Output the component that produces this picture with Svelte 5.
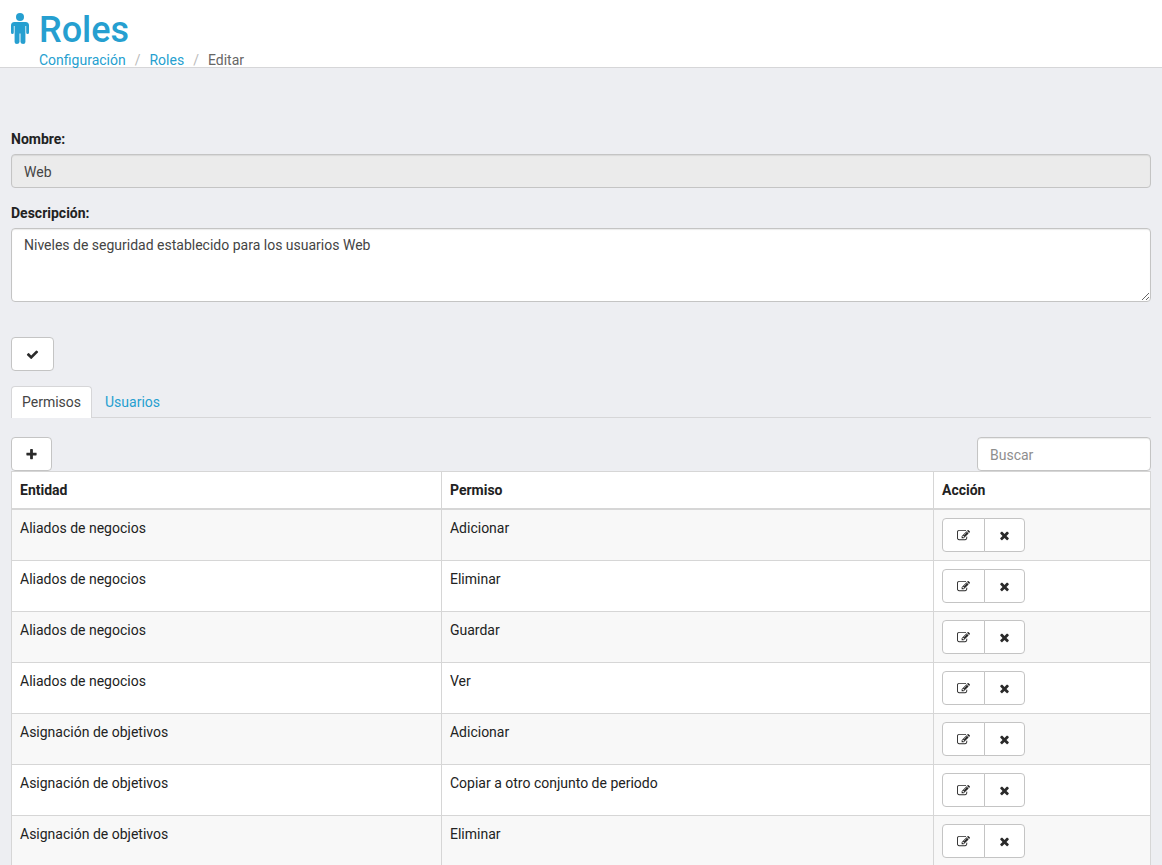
<script>
  let nombre = 'Web';
  let descripcion = 'Niveles de seguridad establecido para los usuarios Web';
  let buscar = '';
  let tab = 'permisos';

  const permisos = [
    { entidad: 'Aliados de negocios', permiso: 'Adicionar' },
    { entidad: 'Aliados de negocios', permiso: 'Eliminar' },
    { entidad: 'Aliados de negocios', permiso: 'Guardar' },
    { entidad: 'Aliados de negocios', permiso: 'Ver' },
    { entidad: 'Asignación de objetivos', permiso: 'Adicionar' },
    { entidad: 'Asignación de objetivos', permiso: 'Copiar a otro conjunto de periodo' },
    { entidad: 'Asignación de objetivos', permiso: 'Eliminar' }
  ];

  $: filas = permisos.filter((p) =>
    (p.entidad + ' ' + p.permiso).toLowerCase().includes(buscar.toLowerCase())
  );
</script>

<header>
  <svg class="male" viewBox="0 0 18 31" aria-hidden="true">
    <circle cx="9" cy="4" r="4" />
    <path d="M3.500 9H14.500Q18 9 18 12.500V19.500Q18 21 16.600 21T15.200 19.500V13H14.400V29Q14.400 31 12.100 31T9.500 29V20.500H8.500V29Q8.200 31 5.900 31T3.600 29V13H2.800V19.500Q2.800 21 1.400 21T0 19.500V12.500Q0 9 3.500 9Z" />
  </svg>
  <div>
    <h1>Roles</h1>
    <nav aria-label="Ruta">
      <ol class="breadcrumb">
        <li><a href="#configuracion">Configuración</a></li>
        <li><a href="#roles">Roles</a></li>
        <li class="active">Editar</li>
      </ol>
    </nav>
  </div>
</header>

<main>
  <form on:submit|preventDefault>
    <div class="form-group">
      <label for="nombre">Nombre:</label>
      <input id="nombre" class="form-control" type="text" bind:value={nombre} disabled />
    </div>
    <div class="form-group">
      <label for="descripcion">Descripción:</label>
      <textarea id="descripcion" class="form-control" rows="3" spellcheck="false" bind:value={descripcion}></textarea>
    </div>
    <button class="btn save" type="submit" aria-label="Guardar">
      <svg class="icon" viewBox="0 0 1792 1792"><path d="M1671 566q0 40-28 68l-724 724-136 136q-28 28-68 28t-68-28l-136-136-362-362q-28-28-28-68t28-68l136-136q28-28 68-28t68 28l294 295 656-657q28-28 68-28t68 28l136 136q28 28 28 68z" /></svg>
    </button>
  </form>

  <ul class="tabs">
    <li><a href="#permisos" class:active={tab === 'permisos'} on:click={() => (tab = 'permisos')}>Permisos</a></li>
    <li><a href="#usuarios" class:active={tab === 'usuarios'} on:click={() => (tab = 'usuarios')}>Usuarios</a></li>
  </ul>

  <div class="toolbar">
    <button class="btn" type="button" aria-label="Agregar">
      <svg class="icon" viewBox="0 0 1792 1792"><path d="M1600 736v192q0 40-28 68t-68 28h-416v416q0 40-28 68t-68 28h-192q-40 0-68-28t-28-68v-416h-416q-40 0-68-28t-28-68v-192q0-40 28-68t68-28h416v-416q0-40 28-68t68-28h192q40 0 68 28t28 68v416h416q40 0 68 28t28 68z" /></svg>
    </button>
    <input class="form-control search" type="text" placeholder="Buscar" aria-label="Buscar" bind:value={buscar} />
  </div>

  <table>
    <thead>
      <tr>
        <th class="entidad">Entidad</th>
        <th class="permiso">Permiso</th>
        <th>Acción</th>
      </tr>
    </thead>
    <tbody>
      {#each filas as fila}
        <tr>
          <td>{fila.entidad}</td>
          <td>{fila.permiso}</td>
          <td>
            <div class="btn-group">
              <button class="btn" type="button" aria-label="Editar">
                <svg class="icon" viewBox="0 0 1792 1792"><path d="M888 1184l116-116-152-152-116 116v56h96v96h56zm440-720q-16-16-33 1l-350 350q-17 17-1 33t33-1l350-350q17-17 1-33zm80 594v190q0 119-84.500 203.500t-203.500 84.500h-832q-119 0-203.500-84.500t-84.500-203.500v-832q0-119 84.500-203.500t203.500-84.500h832q63 0 117 25 15 7 18 23 3 17-9 29l-49 49q-14 14-32 8-23-6-45-6h-832q-66 0-113 47t-47 113v832q0 66 47 113t113 47h832q66 0 113-47t47-113v-126q0-13 9-22l64-64q15-15 35-7t20 29zm-96-738l288 288-672 672h-288v-288zm444 132l-92 92-288-288 92-92q28-28 68-28t68 28l152 152q28 28 28 68t-28 68z" /></svg>
              </button>
              <button class="btn" type="button" aria-label="Eliminar">
                <svg class="icon" viewBox="0 0 1792 1792"><path d="M1490 1322q0 40-28 68l-136 136q-28 28-68 28t-68-28l-294-294-294 294q-28 28-68 28t-68-28l-136-136q-28-28-28-68t28-68l294-294-294-294q-28-28-28-68t28-68l136-136q28-28 68-28t68 28l294 294 294-294q28-28 68-28t68 28l136 136q28 28 28 68t-28 68l-294 294 294 294q28 28 28 68z" /></svg>
              </button>
            </div>
          </td>
        </tr>
      {/each}
    </tbody>
  </table>
</main>

<style>
  :global(body) {
    background: #edeef2;
    color: #222;
    font-family: Roboto, 'Liberation Sans', sans-serif;
    font-size: 14px;
    line-height: 20px;
  }

  :global(*) {
    box-sizing: border-box;
  }

  a {
    color: #269fd0;
    text-decoration: none;
  }

  header {
    display: flex;
    gap: 10px;
    padding: 10px 11px 0;
    background: #fff;
    border-bottom: 1px solid #d6d6d8;
  }

  .male {
    width: 18px;
    height: 31px;
    margin-top: 3px;
    fill: #269fd0;
  }

  h1 {
    margin: 0;
    color: #269fd0;
    font-size: 36px;
    font-weight: 500;
    line-height: 40px;
  }

  .breadcrumb {
    display: flex;
    margin: 0;
    padding: 0;
    height: 17px;
    list-style: none;
  }

  .breadcrumb li + li::before {
    content: '/';
    padding: 0 9px;
    color: #bbb;
  }

  .breadcrumb .active {
    color: #666;
  }

  main {
    padding: 61px 11px 0;
  }

  .form-group {
    margin-bottom: 15px;
  }

  label {
    display: block;
    margin-bottom: 5px;
    font-weight: 700;
  }

  .form-control {
    display: block;
    width: 100%;
    height: 34px;
    padding: 7px 12px 5px;
    background: #fff;
    border: 1px solid #c4c4c4;
    border-radius: 4px;
    box-shadow: inset 0 1px 1px rgba(0, 0, 0, 0.08);
    color: #444;
    font: inherit;
  }

  .form-control::placeholder {
    color: #8e8e8e;
  }

  .form-control:disabled {
    background: #ebebeb;
  }

  textarea.form-control {
    height: 74px;
    padding: 6px 12px;
    resize: vertical;
  }

  .btn {
    display: inline-flex;
    align-items: center;
    justify-content: center;
    width: 41px;
    height: 34px;
    padding: 0;
    background: #fff;
    border: 1px solid #c4c4c4;
    border-radius: 4px;
    cursor: pointer;
  }

  .icon {
    width: 13px;
    height: 13px;
    fill: #2a2a2a;
  }

  .save {
    width: 43px;
    margin-top: 20px;
  }

  .tabs {
    display: flex;
    gap: 2px;
    margin: 15px 0 19px;
    padding: 0;
    border-bottom: 1px solid #d6d6d8;
    list-style: none;
  }

  .tabs a {
    display: block;
    margin-bottom: -1px;
    padding: 5px 10px;
    border: 1px solid transparent;
    border-bottom: 0;
    border-radius: 4px 4px 0 0;
  }

  .tabs a.active {
    padding-bottom: 6px;
    background: #fff;
    border-color: #d6d6d8;
    color: #444;
  }

  .toolbar {
    display: flex;
    justify-content: space-between;
  }

  .search {
    width: 174px;
  }

  table {
    width: 100%;
    background: #fff;
    border-collapse: collapse;
    table-layout: fixed;
  }

  th,
  td {
    padding: 8px;
    border: 1px solid #d6d6d6;
    text-align: left;
    vertical-align: top;
  }

  th {
    border-bottom-width: 2px;
    font-weight: 700;
  }

  .entidad {
    width: 37.75%;
  }

  .permiso {
    width: 43.2%;
  }

  tbody tr:nth-child(odd) {
    background: #f8f8f8;
  }

  .btn-group {
    display: flex;
  }

  .btn-group .btn:first-child {
    width: 43px;
    border-radius: 4px 0 0 4px;
  }

  .btn-group .btn:last-child {
    margin-left: -1px;
    border-radius: 0 4px 4px 0;
  }
</style>
